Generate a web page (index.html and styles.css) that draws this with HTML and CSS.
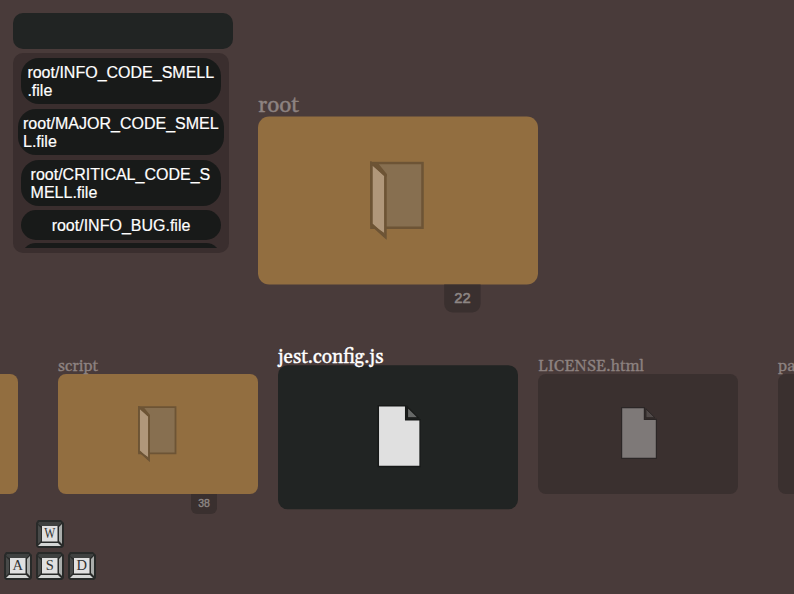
FILE: index.html
```html
<!DOCTYPE html>
<html lang="en">
<head>
<meta charset="utf-8">
<title>File browser</title>
<link rel="stylesheet" href="styles.css">
</head>
<body>
<svg class="defs" aria-hidden="true">
  <symbol id="folder" viewBox="0 0 40 56">
    <path d="M1 1.2H37.5V47.4H1Z" fill="#876f50" stroke="#6d5435" stroke-width="1.8"/>
    <path d="M1 1.2L11 10V54L1 45Z" fill="#b0977a" stroke="#6d5435" stroke-width="1.9"/>
    <path d="M1 1L5.5 1L12 9V11L9.5 10ZM1 45L10 51V54Z" fill="#6d5435"/>
  </symbol>
  <symbol id="file" viewBox="0 0 40 56">
    <path class="page" d="M3.6 1.7H26.4V13.4H38.4V52.3H3.6Z"/>
    <path class="fold" d="M27.9 2.8V11.8H37Z"/>
  </symbol>
  <symbol id="keycap" viewBox="0 0 28 28">
    <path d="M2 0H25L28 3V26L26 28H2L0 26V3Z" fill="#282a29"/>
    <path d="M2 4L5 6H22L25 3.5V2H3Z" fill="#3f4140"/>
    <path d="M2 5L5 8V21L2 24Z" fill="#484a49"/>
    <path d="M26 4V24L23 21V7Z" fill="#aaadab"/>
    <path d="M2 26L5 23H22L25 26Z" fill="#d4d6d5"/>
    <path d="M6 6H21.5V21.5H6Z" fill="#e0e0e0"/>
  </symbol>
</svg>
<div class="top">
  <aside class="search">
    <input class="query" type="text" aria-label="Search">
    <div class="panel">
      <div class="results">
        <div class="result first">root/INFO_CODE_SMELL<br>.file</div>
        <div class="result wide">root/MAJOR_CODE_SMEL<br>L.file</div>
        <div class="result third">root/CRITICAL_CODE_S<br>MELL.file</div>
        <div class="result single">root/INFO_BUG.file</div>
        <div class="result single"></div>
      </div>
    </div>
  </aside>
  <section class="card folder parent">
    <span class="name">root</span><svg class="icon"><use href="#folder"/></svg><span class="count">22</span>
  </section>
</div>
<main class="row">
  <section class="card folder"></section>
  <section class="card folder"><span class="name">script</span><svg class="icon"><use href="#folder"/></svg><span class="count">38</span></section>
  <section class="card selected"><span class="name">jest.config.js</span><svg class="icon"><use href="#file"/></svg></section>
  <section class="card"><span class="name">LICENSE.html</span><svg class="icon"><use href="#file"/></svg></section>
  <section class="card"><span class="name">package.json</span></section>
</main>
<div class="keys">
  <svg class="key up" viewBox="0 0 28 28"><use href="#keycap"/><text x="13.8" y="17.5" textLength="11" lengthAdjust="spacingAndGlyphs">W</text></svg>
  <svg class="key left" viewBox="0 0 28 28"><use href="#keycap"/><text x="13.8" y="18">A</text></svg>
  <svg class="key" viewBox="0 0 28 28"><use href="#keycap"/><text x="13.8" y="18">S</text></svg>
  <svg class="key" viewBox="0 0 28 28"><use href="#keycap"/><text x="13.8" y="18">D</text></svg>
</div>
</body>
</html>
```
FILE: styles.css
```css
* { box-sizing: border-box; }
body {
  margin: 0;
  height: 594px;
  overflow: hidden;
  background: #493b3a;
  font: 16px/18px "Liberation Sans", sans-serif;
}
.defs { display: block; width: 0; height: 0; }
.top { display: flex; height: 374px; padding: 13px 0 0 13px; }
.search { width: 220px; margin-right: 65px; }
.query {
  display: block;
  width: 220px;
  height: 36px;
  border: 0;
  border-radius: 10px;
  background: #212423;
}
.panel {
  width: 216px;
  height: 200px;
  margin-top: 4px;
  padding: 5px;
  border-radius: 10px;
  background: #3a2e2e;
}
.results { display: flex; flex-direction: column; align-items: center; height: 190px; overflow: hidden; }
.result {
  flex: none;
  width: 200px;
  height: 46px;
  margin-bottom: 5px;
  padding: 6px 0 0 6.4px;
  border-radius: 18px;
  background: #181a19;
  color: #fff;
  white-space: nowrap;
  -webkit-text-stroke: .2px #fff;
}
.result.wide { width: 206px; padding-left: 5px; }
.result.third { padding-left: 9.6px; margin-bottom: 4px; }
.result.single { height: 30px; margin-bottom: 3px; padding: 7px 0 0; text-align: center; }
.card {
  position: relative;
  display: flex;
  align-items: center;
  justify-content: center;
  width: 200px;
  height: 120px;
  border-radius: 8px;
  background: #3a302f;
}
.card.folder { background: #926e40; }
.card.parent { margin-top: 127px; transform: translateY(.5px) scale(1.4); }
.card.selected { background: #212423; margin-top: 3px; transform: translateY(.3px) scale(1.2); }
.name {
  position: absolute;
  left: 0;
  bottom: calc(100% - 1px);
  color: #8d8280;
  font: 16px/18px Georgia, Gelasio, "DejaVu Serif", serif;
  white-space: nowrap;
  -webkit-text-stroke: .3px currentColor;
}
.selected .name { color: #fff; bottom: calc(100% - 1.6px); }
.icon { width: 40px; height: 56px; }
.page { fill: var(--page, #7e7978); stroke: var(--edge, #2b2626); stroke-width: 1.2; }
.fold { fill: var(--fold, #514a49); stroke: var(--edge, #2b2626); stroke-width: 1; }
.selected .icon { --page: #e0e0e0; --fold: #666867; --edge: #171918; }
.count {
  position: absolute;
  top: 100%;
  right: 41px;
  width: 26px;
  height: 20px;
  border-radius: 0 0 6px 6px;
  background: #3a302f;
  color: #8d8684;
  font-size: 10.5px;
  line-height: 18px;
  text-align: center;
  -webkit-text-stroke: .4px currentColor;
}
.row {
  display: grid;
  grid-template-columns: repeat(5, 200px);
  gap: 40px;
  width: 976px;
  height: 120px;
  margin-left: -182px;
  overflow-x: clip;
}
.keys {
  display: grid;
  grid-template-columns: repeat(3, 28px);
  gap: 4px;
  margin: 26px 0 0 4px;
}
.key { width: 28px; height: 28px; }
.key.up { grid-column: 2; }
.key.left { grid-column: 1; }
.key text { fill: #303332; font: 14.5px "Liberation Serif", serif; text-anchor: middle; }
```
